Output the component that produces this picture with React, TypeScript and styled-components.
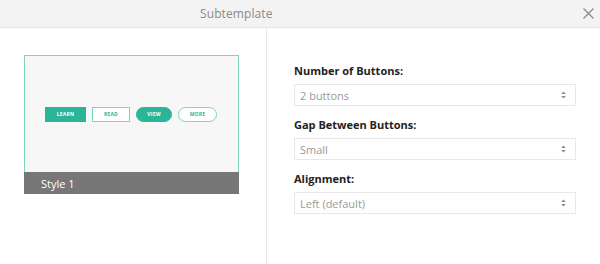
import React from "react";
import styled, { createGlobalStyle, css } from "styled-components";

const GlobalStyle = createGlobalStyle`
  html, body {
    margin: 0;
    padding: 0;
    background: #ffffff;
    font-family: "Open Sans", "Liberation Sans", sans-serif;
  }
  * {
    box-sizing: border-box;
  }
`;

const Dialog = styled.div`
  width: 600px;
  height: 264px;
  display: flex;
  flex-direction: column;
  background: #ffffff;
  overflow: hidden;
`;

const Header = styled.div`
  height: 28px;
  flex-shrink: 0;
  background: #f3f3f3;
  border-bottom: 1px solid #e6e6e6;
  display: flex;
  align-items: center;
  padding-left: 200px;
  padding-right: 5px;
`;

const Title = styled.div`
  flex: 1;
  font-size: 12px;
  color: #8a8a8a;
  letter-spacing: 0.1px;
`;

const CloseButton = styled.button`
  width: 14px;
  height: 14px;
  padding: 0;
  border: none;
  background: none;
  display: flex;
  align-items: center;
  justify-content: center;
  cursor: pointer;
`;

const Body = styled.div`
  flex: 1;
  display: flex;
`;

const LeftPane = styled.div`
  width: 267px;
  border-right: 1px solid #e8e8e8;
  padding: 27px 0 0 24px;
`;

const StyleCard = styled.div`
  width: 215px;
  display: flex;
  flex-direction: column;
`;

const Preview = styled.div`
  height: 117px;
  background: #f7f7f7;
  border: 1px solid #7fd3c1;
  border-bottom: none;
  display: flex;
  align-items: center;
  padding-left: 20px;
  gap: 6px;
`;

const PreviewButton = styled.div<{ $filled?: boolean; $pill?: boolean; $w: number }>`
  width: ${(p) => p.$w}px;
  height: 15px;
  display: flex;
  align-items: center;
  justify-content: center;
  font-size: 5px;
  font-weight: 700;
  letter-spacing: 0.2px;
  border: 1px solid #2bb598;
  border-radius: ${(p) => (p.$pill ? "8px" : "0")};
  ${(p) =>
    p.$filled
      ? css`
          background: #2bb598;
          color: #ffffff;
        `
      : css`
          background: #ffffff;
          color: #2bb598;
          border-color: #7fd3c1;
        `}
`;

const CardFooter = styled.div`
  height: 22px;
  background: #777777;
  color: #ffffff;
  font-size: 11px;
  display: flex;
  align-items: center;
  padding-left: 17px;
`;

const RightPane = styled.div`
  flex: 1;
  padding: 35px 24px 0 27px;
  display: flex;
  flex-direction: column;
`;

const Field = styled.div`
  display: flex;
  flex-direction: column;
  margin-bottom: 11px;
`;

const Label = styled.div`
  font-size: 11px;
  font-weight: 700;
  color: #222222;
  line-height: 15px;
  margin-bottom: 6px;
`;

const Select = styled.div`
  height: 22px;
  border: 1px solid #e8e8e8;
  background: #ffffff;
  display: flex;
  align-items: center;
  justify-content: space-between;
  padding: 0 9px 0 5px;
  font-size: 11px;
  color: #9a9a9a;
`;

const Arrows = () => (
  <svg width="5" height="8" viewBox="0 0 5 8">
    <path d="M2.5 0.5 L4.8 3 H0.2 Z" fill="#8c8c8c" />
    <path d="M2.5 7.5 L4.8 5 H0.2 Z" fill="#8c8c8c" />
  </svg>
);

const fields = [
  { label: "Number of Buttons:", value: "2 buttons" },
  { label: "Gap Between Buttons:", value: "Small" },
  { label: "Alignment:", value: "Left (default)" },
];

export default function App() {
  return (
    <>
      <GlobalStyle />
      <Dialog>
        <Header>
          <Title>Subtemplate</Title>
          <CloseButton aria-label="Close">
            <svg width="11" height="11" viewBox="0 0 11 11">
              <path d="M0.5 0.5 L10.5 10.5 M10.5 0.5 L0.5 10.5" stroke="#8a8a8a" strokeWidth="1.3" />
            </svg>
          </CloseButton>
        </Header>
        <Body>
          <LeftPane>
            <StyleCard>
              <Preview>
                <PreviewButton $filled $w={41}>LEARN</PreviewButton>
                <PreviewButton $w={38}>READ</PreviewButton>
                <PreviewButton $filled $pill $w={36}>VIEW</PreviewButton>
                <PreviewButton $pill $w={39}>MORE</PreviewButton>
              </Preview>
              <CardFooter>Style 1</CardFooter>
            </StyleCard>
          </LeftPane>
          <RightPane>
            {fields.map((f) => (
              <Field key={f.label}>
                <Label>{f.label}</Label>
                <Select>
                  <span>{f.value}</span>
                  <Arrows />
                </Select>
              </Field>
            ))}
          </RightPane>
        </Body>
      </Dialog>
    </>
  );
}
